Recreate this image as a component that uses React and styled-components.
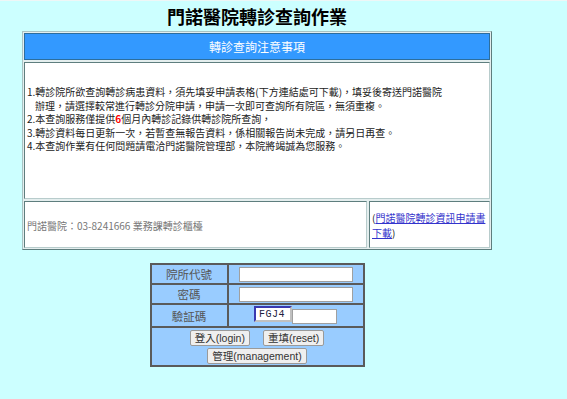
import styled, { createGlobalStyle } from "styled-components";

const GlobalStyle = createGlobalStyle`
    html, body {
        margin: 0;
        padding: 0;
        background: #CCFFFF;
    }
    body {
        border-top: 1px solid #EEF6F6;
        font-family: "Liberation Sans", "Noto Sans CJK TC", sans-serif;
    }
`;

export default function App(){
    return (
        <>
            <GlobalStyle />
            <Pagina>
                <Titulo>門諾醫院轉診查詢作業</Titulo>
                <Quadro>
                    <Cabecalho>轉診查詢注意事項</Cabecalho>
                    <Corpo>
                        <Linha>1.轉診院所欲查詢轉診病患資料，須先填妥申請表格(下方連結處可下載)，填妥後寄送門諾醫院</Linha>
                        <Linha recuo>辦理，請選擇較常進行轉診分院申請，申請一次即可查詢所有院區，無須重複。</Linha>
                        <Linha>2.本查詢服務僅提供<Vermelho>6</Vermelho>個月內轉診記錄供轉診院所查詢，</Linha>
                        <Linha>3.轉診資料每日更新一次，若暫查無報告資料，係相關報告尚未完成，請另日再查。</Linha>
                        <Linha>4.本查詢作業有任何問題請電洽門諾醫院管理部，本院將竭誠為您服務。</Linha>
                    </Corpo>
                    <Rodape>
                        <Contato>門諾醫院：03-8241666 業務課轉診櫃檯</Contato>
                        <Download>
                            <LinhaLink>(<Link href="#">門諾醫院轉診資訊申請書</Link></LinhaLink>
                            <LinhaLink><Link href="#">下載</Link>)</LinhaLink>
                        </Download>
                    </Rodape>
                </Quadro>
                <Login>
                    <Rotulo>院所代號</Rotulo>
                    <Campo><Entrada type="text" /></Campo>
                    <Rotulo>密碼</Rotulo>
                    <Campo><Entrada type="password" /></Campo>
                    <Rotulo alto>驗証碼</Rotulo>
                    <Campo alto>
                        <Captcha>FGJ4</Captcha>
                        <Entrada type="text" largura={45} />
                    </Campo>
                    <Botoes>
                        <LinhaBotoes>
                            <Botao>登入(login)</Botao>
                            <Botao>重填(reset)</Botao>
                        </LinhaBotoes>
                        <LinhaBotoes>
                            <Botao>管理(management)</Botao>
                        </LinhaBotoes>
                    </Botoes>
                </Login>
            </Pagina>
        </>
    )
}

const Pagina = styled.div`
    width: 470px;
    margin-left: 22px;
    display: flex;
    flex-direction: column;
    align-items: stretch;
`

const Titulo = styled.div`
    height: 30px;
    line-height: 30px;
    text-align: center;
    font-family: "Noto Sans CJK TC", sans-serif;
    font-size: 18px;
    font-weight: 700;
    color: #000000;
`

const Quadro = styled.div`
    box-sizing: border-box;
    border: 1px solid;
    border-color: #A8C4C4 #5E7E7E #5E7E7E #A8C4C4;
    background: #E4EEEE;
    padding: 1px;
    display: flex;
    flex-direction: column;
    gap: 2px;
`

const Celula = styled.div`
    box-sizing: border-box;
    border: 1px solid;
    border-color: #5E7E7E #B8CCCC #B8CCCC #5E7E7E;
    background: #FFFFFF;
    font-family: "Noto Sans CJK TC", sans-serif;
    font-size: 10px;
`

const Cabecalho = styled(Celula)`
    height: 27px;
    background: #3399FF;
    border-color: #2C6E9E;
    color: #FFFFFF;
    font-size: 12px;
    display: flex;
    align-items: center;
    justify-content: center;
`

const Corpo = styled(Celula)`
    height: 137px;
    padding: 22px 1px 0 2px;
    color: #222222;
    line-height: 13.6px;
`

const Linha = styled.div`
    white-space: nowrap;
    padding-left: ${p => p.recuo ? "8px" : "0"};
`

const Vermelho = styled.span`
    color: #FF0000;
    font-weight: 700;
`

const Rodape = styled.div`
    display: flex;
    gap: 2px;
    height: 47px;
`

const Contato = styled(Celula)`
    flex: 1;
    display: flex;
    align-items: center;
    padding: 2px 2px 0;
    color: #777777;
`

const Download = styled(Celula)`
    width: 121px;
    padding: 1px 2px 0;
    display: flex;
    flex-direction: column;
    justify-content: center;
    gap: 1px;
    color: #222222;
`

const LinhaLink = styled.div`
    white-space: nowrap;
    line-height: 14px;
`

const Link = styled.a`
    color: #3333CC;
    text-decoration: underline;
`

const Login = styled.div`
    box-sizing: border-box;
    width: 215px;
    margin: 13px auto 0;
    padding: 2px;
    background: #5A5A5A;
    display: grid;
    grid-template-columns: 75px 1fr;
    gap: 2px;
`

const Rotulo = styled.div`
    height: ${p => p.alto ? "21px" : "18px"};
    background: #99CCFF;
    display: flex;
    align-items: center;
    justify-content: center;
    font-family: "Noto Sans CJK TC", sans-serif;
    font-size: 11.5px;
    color: #555555;
`

const Campo = styled.div`
    height: ${p => p.alto ? "21px" : "18px"};
    background: #99CCFF;
    display: flex;
    align-items: ${p => p.alto ? "flex-end" : "center"};
    justify-content: center;
    padding-bottom: ${p => p.alto ? "2px" : "0"};
    box-sizing: border-box;
`

const Entrada = styled.input`
    box-sizing: border-box;
    width: ${p => p.largura || 114}px;
    height: 15px;
    margin: 0;
    padding: 0 2px;
    border: 1px solid #A0A0A0;
    background: #FFFFFF;
    outline: none;
`

const Captcha = styled.div`
    box-sizing: border-box;
    width: 38px;
    height: 16px;
    margin-bottom: 2px;
    border: 2px solid;
    border-color: #3A3AB0 #C0C0C0 #C0C0C0 #3A3AB0;
    background: #FFFFFF;
    font-family: "Liberation Mono", monospace;
    font-size: 10px;
    letter-spacing: 0.5px;
    color: #202040;
    display: flex;
    align-items: center;
    padding-left: 3px;
`

const Botoes = styled.div`
    grid-column: 1 / 3;
    height: 37px;
    background: #99CCFF;
    display: flex;
    flex-direction: column;
    justify-content: center;
    gap: 2px;
`

const LinhaBotoes = styled.div`
    display: flex;
    justify-content: center;
    gap: 13px;
`

const Botao = styled.button`
    height: 16px;
    margin: 0;
    padding: 0 4px;
    border: 1px solid #9A9A9A;
    border-radius: 2px;
    background: #EFEFEF;
    font-family: "Liberation Sans", "Noto Sans CJK TC", sans-serif;
    font-size: 10.5px;
    color: #333333;
    line-height: 14px;
    white-space: nowrap;
`
